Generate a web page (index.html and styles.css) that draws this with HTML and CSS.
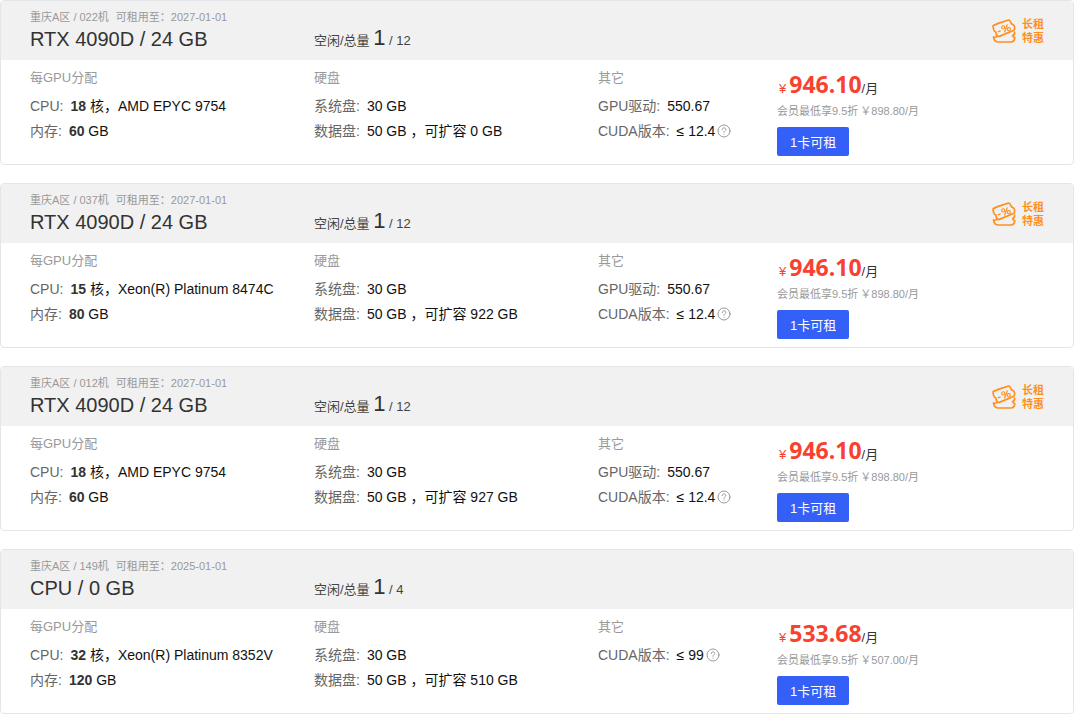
FILE: index.html
```html
<!DOCTYPE html>
<html lang="zh-CN">
<head>
    <meta charset="UTF-8">
    <meta name="viewport" content="width=device-width, initial-scale=1.0">
    <title>GPU 主机列表</title>
    <link rel="stylesheet" href="styles.css">
</head>
<body>
    <!-- Shared icons -->
    <svg class="icon-defs" aria-hidden="true">
        <symbol id="icon-coupon" viewBox="0 0 24 24">
            <g fill="none" stroke="currentColor" stroke-width="1.7" stroke-linejoin="round" stroke-linecap="round">
                <path d="M1.2 6.6 L6.2 4.4 L16.6 1 C17.6 1 18.4 2 18.8 3.4 C19 4.8 20 5.4 21.6 6 C22.8 7.4 22.8 9.6 22 11.2 L7.4 17.4 C5.6 17.8 4.6 16.4 4.2 15 C4.4 13.4 3.8 12.6 2.4 12 C1.4 10.6 1 8.8 1.2 6.6 Z"/>
                <path d="M22.6 13.2 C22.8 15 22.2 16 20.6 16.8 C21 18 22 18.4 22.8 18.6 C22.6 20.8 21.4 22.6 19.6 23 H5.8 C3.6 22.8 2 21.2 1.6 18.4"/>
                <path d="M1.6 18.2 C3 18.4 4.4 18 5.4 17.2"/>
                <path d="M6.4 12.6 L8 12.1" stroke-width="1.5"/>
                <path d="M12.6 13 L15.2 5.8" stroke-width="1.2"/>
                <circle cx="11.2" cy="8.4" r="1.6" stroke-width="1.1"/>
                <circle cx="16.8" cy="10.2" r="1.6" stroke-width="1.1"/>
            </g>
        </symbol>
        <symbol id="icon-help" viewBox="0 0 14 14">
            <g fill="none" stroke="currentColor" stroke-width="1" stroke-linecap="round">
                <circle cx="7" cy="7" r="6"/>
                <path d="M5.2 5.6 C5.2 3.2 8.8 3.2 8.8 5.5 C8.8 6.8 7 6.8 7 8.3"/>
                <path d="M7 10.1 V10.2"/>
            </g>
        </symbol>
    </svg>

    <main class="machine-list">
        <article class="card">
            <header class="card-header">
                <div>
                    <div class="meta"><span>重庆A区 / 022机</span><span>可租用至：2027-01-01</span></div>
                    <h2 class="title">RTX 4090D / 24 GB</h2>
                </div>
                <div class="stock">空闲/总量 <span class="free">1</span> / 12</div>
                <div class="promo"><svg class="coupon"><use href="#icon-coupon"/></svg><span>长租<br>特惠</span></div>
            </header>
            <div class="card-body">
                <section>
                    <h3>每GPU分配</h3>
                    <p><span class="label">CPU:</span><b>18</b> 核，AMD EPYC 9754</p>
                    <p><span class="label">内存:</span><b>60</b> GB</p>
                </section>
                <section>
                    <h3>硬盘</h3>
                    <p><span class="label">系统盘:</span>30 GB</p>
                    <p><span class="label">数据盘:</span>50 GB ，可扩容 0 GB</p>
                </section>
                <section>
                    <h3>其它</h3>
                    <p><span class="label">GPU驱动:</span>550.67</p>
                    <p><span class="label">CUDA版本:</span>≤ 12.4<svg class="help"><use href="#icon-help"/></svg></p>
                </section>
                <div class="order">
                    <div class="price"><span class="currency">¥</span><strong>946.10</strong>/月</div>
                    <div class="member"><span>会员最低享9.5折</span><span>￥898.80/月</span></div>
                    <button type="button">1卡可租</button>
                </div>
            </div>
        </article>

        <article class="card">
            <header class="card-header">
                <div>
                    <div class="meta"><span>重庆A区 / 037机</span><span>可租用至：2027-01-01</span></div>
                    <h2 class="title">RTX 4090D / 24 GB</h2>
                </div>
                <div class="stock">空闲/总量 <span class="free">1</span> / 12</div>
                <div class="promo"><svg class="coupon"><use href="#icon-coupon"/></svg><span>长租<br>特惠</span></div>
            </header>
            <div class="card-body">
                <section>
                    <h3>每GPU分配</h3>
                    <p><span class="label">CPU:</span><b>15</b> 核，Xeon(R) Platinum 8474C</p>
                    <p><span class="label">内存:</span><b>80</b> GB</p>
                </section>
                <section>
                    <h3>硬盘</h3>
                    <p><span class="label">系统盘:</span>30 GB</p>
                    <p><span class="label">数据盘:</span>50 GB ，可扩容 922 GB</p>
                </section>
                <section>
                    <h3>其它</h3>
                    <p><span class="label">GPU驱动:</span>550.67</p>
                    <p><span class="label">CUDA版本:</span>≤ 12.4<svg class="help"><use href="#icon-help"/></svg></p>
                </section>
                <div class="order">
                    <div class="price"><span class="currency">¥</span><strong>946.10</strong>/月</div>
                    <div class="member"><span>会员最低享9.5折</span><span>￥898.80/月</span></div>
                    <button type="button">1卡可租</button>
                </div>
            </div>
        </article>

        <article class="card">
            <header class="card-header">
                <div>
                    <div class="meta"><span>重庆A区 / 012机</span><span>可租用至：2027-01-01</span></div>
                    <h2 class="title">RTX 4090D / 24 GB</h2>
                </div>
                <div class="stock">空闲/总量 <span class="free">1</span> / 12</div>
                <div class="promo"><svg class="coupon"><use href="#icon-coupon"/></svg><span>长租<br>特惠</span></div>
            </header>
            <div class="card-body">
                <section>
                    <h3>每GPU分配</h3>
                    <p><span class="label">CPU:</span><b>18</b> 核，AMD EPYC 9754</p>
                    <p><span class="label">内存:</span><b>60</b> GB</p>
                </section>
                <section>
                    <h3>硬盘</h3>
                    <p><span class="label">系统盘:</span>30 GB</p>
                    <p><span class="label">数据盘:</span>50 GB ，可扩容 927 GB</p>
                </section>
                <section>
                    <h3>其它</h3>
                    <p><span class="label">GPU驱动:</span>550.67</p>
                    <p><span class="label">CUDA版本:</span>≤ 12.4<svg class="help"><use href="#icon-help"/></svg></p>
                </section>
                <div class="order">
                    <div class="price"><span class="currency">¥</span><strong>946.10</strong>/月</div>
                    <div class="member"><span>会员最低享9.5折</span><span>￥898.80/月</span></div>
                    <button type="button">1卡可租</button>
                </div>
            </div>
        </article>

        <!-- CPU only machine -->
        <article class="card">
            <header class="card-header">
                <div>
                    <div class="meta"><span>重庆A区 / 149机</span><span>可租用至：2025-01-01</span></div>
                    <h2 class="title">CPU / 0 GB</h2>
                </div>
                <div class="stock">空闲/总量 <span class="free">1</span> / 4</div>
            </header>
            <div class="card-body">
                <section>
                    <h3>每GPU分配</h3>
                    <p><span class="label">CPU:</span><b>32</b> 核，Xeon(R) Platinum 8352V</p>
                    <p><span class="label">内存:</span><b>120</b> GB</p>
                </section>
                <section>
                    <h3>硬盘</h3>
                    <p><span class="label">系统盘:</span>30 GB</p>
                    <p><span class="label">数据盘:</span>50 GB ，可扩容 510 GB</p>
                </section>
                <section>
                    <h3>其它</h3>
                    <p><span class="label">CUDA版本:</span>≤ 99<svg class="help"><use href="#icon-help"/></svg></p>
                </section>
                <div class="order">
                    <div class="price"><span class="currency">¥</span><strong>533.68</strong>/月</div>
                    <div class="member"><span>会员最低享9.5折</span><span>￥507.00/月</span></div>
                    <button type="button">1卡可租</button>
                </div>
            </div>
        </article>
    </main>
</body>
</html>
```

FILE: styles.css
```css
* {
    box-sizing: border-box;
}
body {
    margin: 0 6px 0 0;
    font-family: "Liberation Sans", "Noto Sans CJK SC", sans-serif;
    font-size: 14px;
    color: #111;
    background: #fff;
}
h2, h3, p {
    margin: 0;
    font-weight: normal;
}
.icon-defs {
    display: none;
}
.machine-list {
    display: grid;
    gap: 18px;
}
.card {
    border: 1px solid #e4e5e9;
    border-radius: 4px;
    overflow: hidden;
}

/* Header and body share the same columns */
.card-header,
.card-body {
    display: grid;
    grid-template-columns: 284fr 284fr 179fr 296fr;
    padding-left: 29px;
}
.card-header {
    padding-top: 8px;
    padding-bottom: 7px;
    background: #f1f1f1;
}
.meta {
    display: flex;
    gap: 7px;
    font-size: 11px;
    line-height: 16px;
    color: #999;
}
.title {
    font-size: 20px;
    line-height: 28px;
    color: #333;
}
.stock {
    align-self: end;
    font-size: 13px;
    line-height: 24px;
    color: #444;
}
.free {
    font-size: 22px;
    color: #333;
}
.promo {
    grid-column: 4;
    display: flex;
    justify-content: flex-end;
    align-items: center;
    gap: 6px;
    padding-right: 29px;
    font-size: 11px;
    font-weight: bold;
    line-height: 14px;
    color: #ff8f1f;
}
.coupon {
    width: 24px;
    height: 24px;
}

.card-body {
    padding-top: 8px;
    padding-bottom: 8px;
}
.card-body h3 {
    margin-bottom: 6px;
    font-size: 13px;
    line-height: 20px;
    color: #999;
}
.card-body p {
    line-height: 25px;
    white-space: nowrap;
}
.card-body b {
    color: #333;
}
.label {
    margin-right: 7px;
    color: #666;
}
.help {
    width: 14px;
    height: 14px;
    margin-left: 2px;
    vertical-align: -2px;
    color: #999;
}

.order {
    padding-top: 2px;
}
.price {
    padding-left: 2px;
    font-size: 13px;
    line-height: 28px;
    color: #333;
}
.price strong {
    font-family: "Open Sans", "Noto Sans", sans-serif;
    font-size: 23px;
    color: #fa4130;
}
.currency {
    margin-right: 3px;
    color: #fa4130;
}
.member {
    display: flex;
    gap: 2px;
    margin-bottom: 8px;
    font-size: 11px;
    line-height: 16px;
    color: #999;
}
button {
    height: 29px;
    padding: 0 13px;
    border: none;
    border-radius: 2px;
    font-family: inherit;
    font-size: 13px;
    color: #fff;
    background: #3560f7;
    cursor: pointer;
}
```
